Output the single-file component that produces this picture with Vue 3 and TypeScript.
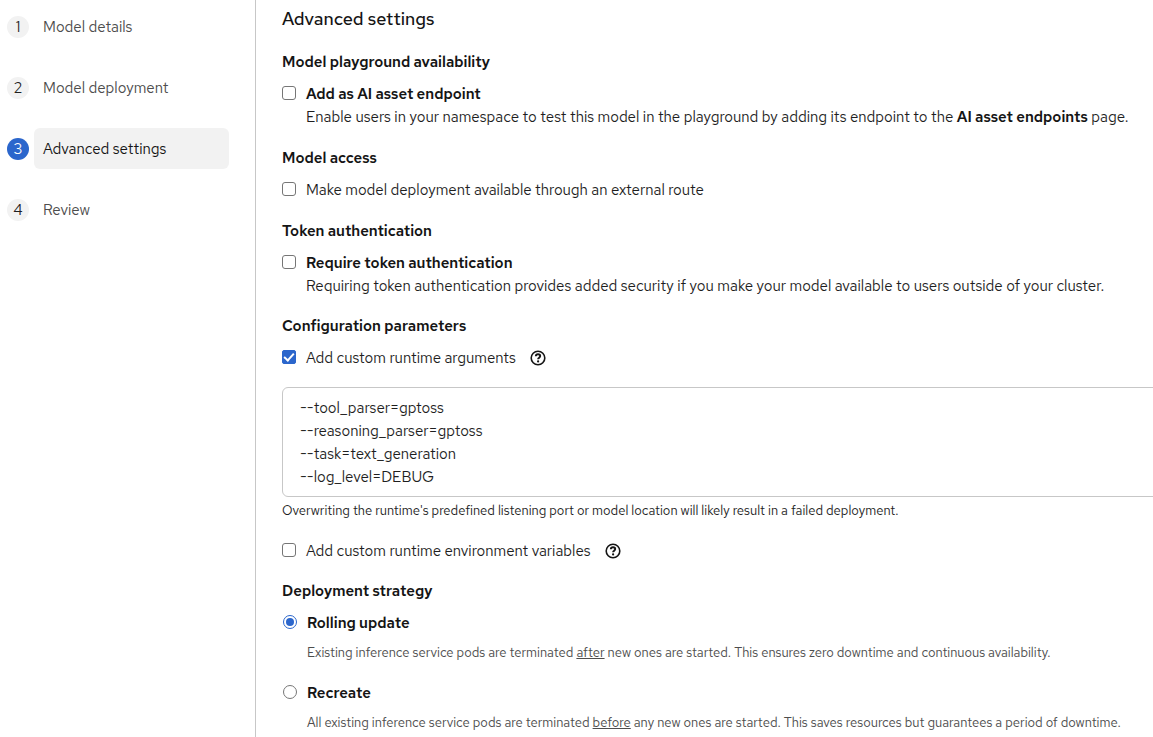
<script setup lang="ts">
import { ref } from 'vue'

interface Step {
  id: number
  label: string
}

const steps: Step[] = [
  { id: 1, label: 'Model details' },
  { id: 2, label: 'Model deployment' },
  { id: 3, label: 'Advanced settings' },
  { id: 4, label: 'Review' },
]

const currentStep = ref(3)
const aiAsset = ref(false)
const externalRoute = ref(false)
const tokenAuth = ref(false)
const customArgs = ref(true)
const customEnv = ref(false)
const strategy = ref<'rolling' | 'recreate'>('rolling')
const runtimeArgs = ref(
  ['--tool_parser=gptoss', '--reasoning_parser=gptoss', '--task=text_generation', '--log_level=DEBUG'].join('\n'),
)
</script>

<template>
  <div class="wizard">
    <nav class="steps" aria-label="Wizard steps">
      <ol class="step-list">
        <li v-for="step in steps" :key="step.id">
          <button
            type="button"
            class="step"
            :class="{ current: step.id === currentStep }"
            :aria-current="step.id === currentStep ? 'step' : undefined"
            @click="currentStep = step.id"
          >
            <span class="number">{{ step.id }}</span>
            <span class="name">{{ step.label }}</span>
          </button>
        </li>
      </ol>
    </nav>

    <main class="content">
      <h1>Advanced settings</h1>

      <section>
        <h2>Model playground availability</h2>
        <div class="check">
          <input id="ai-asset" v-model="aiAsset" type="checkbox" aria-describedby="ai-asset-text" />
          <div>
            <label for="ai-asset" class="strong">Add as AI asset endpoint</label>
            <p id="ai-asset-text">
              Enable users in your namespace to test this model in the playground by adding its endpoint to the
              <b>AI asset endpoints</b> page.
            </p>
          </div>
        </div>
      </section>

      <section>
        <h2>Model access</h2>
        <div class="check">
          <input id="route" v-model="externalRoute" type="checkbox" />
          <label for="route">Make model deployment available through an external route</label>
        </div>
      </section>

      <section>
        <h2>Token authentication</h2>
        <div class="check">
          <input id="token" v-model="tokenAuth" type="checkbox" aria-describedby="token-text" />
          <div>
            <label for="token" class="strong">Require token authentication</label>
            <p id="token-text">
              Requiring token authentication provides added security if you make your model available to users outside
              of your cluster.
            </p>
          </div>
        </div>
      </section>

      <section class="tight">
        <h2>Configuration parameters</h2>
        <div class="check">
          <input id="args" v-model="customArgs" type="checkbox" />
          <label for="args">Add custom runtime arguments</label>
          <button type="button" class="help" aria-label="More info about runtime arguments">
            <svg viewBox="0 0 16 16" aria-hidden="true">
              <circle cx="8" cy="8" r="6.8" />
              <path d="M5.8 6.2C5.9 4.9 6.8 4.2 8 4.2s2.2.8 2.2 1.9c0 1.5-2.1 1.6-2.1 3.1" />
              <circle class="dot" cx="8.1" cy="11.4" r="1.1" />
            </svg>
          </button>
        </div>
        <textarea
          v-model="runtimeArgs"
          class="args"
          rows="4"
          spellcheck="false"
          aria-label="Custom runtime arguments"
          aria-describedby="args-text"
        ></textarea>
        <p id="args-text" class="small">
          Overwriting the runtime's predefined listening port or model location will likely result in a failed
          deployment.
        </p>
        <div class="check env">
          <input id="env" v-model="customEnv" type="checkbox" />
          <label for="env">Add custom runtime environment variables</label>
          <button type="button" class="help" aria-label="More info about environment variables">
            <svg viewBox="0 0 16 16" aria-hidden="true">
              <circle cx="8" cy="8" r="6.8" />
              <path d="M5.8 6.2C5.9 4.9 6.8 4.2 8 4.2s2.2.8 2.2 1.9c0 1.5-2.1 1.6-2.1 3.1" />
              <circle class="dot" cx="8.1" cy="11.4" r="1.1" />
            </svg>
          </button>
        </div>
      </section>

      <section class="tight" role="radiogroup" aria-labelledby="strategy-title">
        <h2 id="strategy-title">Deployment strategy</h2>
        <div class="check radio">
          <input id="rolling" v-model="strategy" type="radio" name="strategy" value="rolling" />
          <div>
            <label for="rolling" class="strong">Rolling update</label>
            <p class="small muted">
              Existing inference service pods are terminated <u>after</u> new ones are started. This ensures zero
              downtime and continuous availability.
            </p>
          </div>
        </div>
        <div class="check radio">
          <input id="recreate" v-model="strategy" type="radio" name="strategy" value="recreate" />
          <div>
            <label for="recreate" class="strong">Recreate</label>
            <p class="small muted">
              All existing inference service pods are terminated <u>before</u> any new ones are started. This saves
              resources but guarantees a period of downtime.
            </p>
          </div>
        </div>
      </section>
    </main>
  </div>
</template>

<style>
body {
  margin: 0;
  background: #fff;
}
</style>

<style scoped>
.wizard {
  display: grid;
  grid-template-columns: 256px minmax(0, 1fr);
  height: 100vh;
  overflow: hidden;
  color: #1f1f1f;
  font: 400 15px/23px 'Red Hat Text', Inter, 'Open Sans', sans-serif;
}

button,
textarea {
  font: inherit;
  color: inherit;
}

.steps {
  box-sizing: border-box;
  padding: 6px 26px 0 7px;
  border-right: 1px solid #c7c7c7;
}

.step-list {
  display: flex;
  flex-direction: column;
  gap: 20px;
  margin: 0;
  padding: 0;
  list-style: none;
}

.step {
  display: flex;
  align-items: center;
  gap: 5px;
  width: 100%;
  padding: 0;
  border: 0;
  background: none;
  text-align: left;
  cursor: pointer;
}

.number {
  flex: none;
  width: 22px;
  height: 22px;
  border-radius: 50%;
  background: #f2f2f2;
  line-height: 22px;
  text-align: center;
}

.name {
  flex: 1;
  padding: 10px 9px 8px;
  border-radius: 6px;
  color: #4d4d4d;
}

.current .number {
  background: #2b66cc;
  color: #fff;
}

.current .name {
  background: #f2f2f2;
  color: #151515;
}

.content {
  padding: 7px 0 0 26px;
  white-space: nowrap;
}

h1,
h2,
p {
  margin: 0;
}

h1 {
  margin-bottom: 20px;
  color: #151515;
  font-size: 18px;
  font-weight: 500;
  line-height: 24px;
}

h2 {
  margin-bottom: 9px;
  color: #151515;
  font-size: 15px;
  font-weight: 600;
  line-height: 23px;
}

section {
  margin-top: 18px;
}

.tight {
  margin-top: 17px;
}

label {
  display: block;
}

.strong,
b {
  color: #151515;
  font-weight: 600;
}

.check {
  display: flex;
  align-items: flex-start;
  gap: 10px;
}

input {
  appearance: none;
  box-sizing: border-box;
  display: grid;
  place-items: center;
  flex: none;
  width: 14px;
  height: 14px;
  margin: 3px 0 0;
  border: 1px solid #767676;
  border-radius: 3px;
  background: #fff;
}

input[type='checkbox']:checked {
  border-color: #2b66cc;
  border-radius: 2px;
  background: #2b66cc;
}

input[type='checkbox']:checked::before {
  content: '';
  box-sizing: border-box;
  width: 6px;
  height: 10px;
  margin-bottom: 2px;
  border: solid #fff;
  border-width: 0 2px 2px 0;
  transform: rotate(42deg);
}

input[type='radio'] {
  border-radius: 50%;
}

input[type='radio']:checked {
  border-color: #2b66cc;
}

input[type='radio']:checked::before {
  content: '';
  width: 8px;
  height: 8px;
  border-radius: 50%;
  background: #2b66cc;
}

.radio {
  padding-left: 1px;
}

.radio + .radio {
  margin-top: 19px;
}

.radio p {
  margin-top: 8px;
}

.help {
  display: flex;
  margin-left: 4px;
  padding: 3px 0;
  border: 0;
  background: none;
}

.help svg {
  width: 16px;
  height: 16px;
  fill: none;
  stroke: #151515;
  stroke-width: 1.6;
}

.help path {
  stroke-width: 1.9;
}

.help .dot {
  fill: #151515;
  stroke: none;
}

.args {
  display: block;
  box-sizing: border-box;
  width: calc(100% + 20px);
  height: 110px;
  margin-top: 17px;
  padding: 9px 17px 7px;
  border: 1px solid #c7c7c7;
  border-radius: 6px;
  background: #fff;
  outline: none;
  resize: none;
  overflow: hidden;
}

.small {
  font-size: 13px;
  line-height: 20px;
}

.args + .small {
  margin-top: 4px;
}

.muted {
  color: #4d4d4d;
}

.env {
  margin-top: 19px;
}
</style>
